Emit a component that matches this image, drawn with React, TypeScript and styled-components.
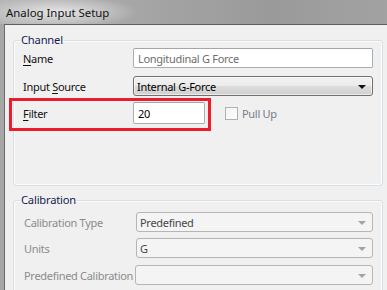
import React from "react";
import styled, { createGlobalStyle } from "styled-components";

const Global = createGlobalStyle`
  html, body { margin: 0; padding: 0; }
  body { font-family: "Segoe UI", "Noto Sans", "Open Sans", sans-serif; font-size: 11px; letter-spacing: -0.3px; }
  * { box-sizing: border-box; }
`;

const Window = styled.div`
  width: 387px;
  height: 290px;
  overflow: hidden;
  display: flex;
  flex-direction: column;
  background: #a6a6a6;
`;

const TitleBar = styled.div`
  height: 24px;
  flex: none;
  display: flex;
  align-items: center;
  padding-left: 6px;
  color: #111;
  font-size: 11.4px;
  letter-spacing: 0;
  background:
    radial-gradient(ellipse 80px 16px at 58px 12px, rgba(235,235,235,0.9), rgba(235,235,235,0) 100%),
    linear-gradient(to right, #b4b4b4 0%, #a4a4a4 40%, #9a9a9a 70%, #a2a2a2 100%);
`;

const Client = styled.div`
  flex: 1;
  margin-left: 4px;
  background: #f0f0f0;
  border-top: 1px solid #5e5e5e;
  border-left: 1px solid #6a6a6a;
  padding: 0 4px 0 8px;
  display: flex;
  flex-direction: column;
`;

const Group = styled.fieldset<{ $top: number; $height: number }>`
  margin: ${(p) => p.$top}px 0 0 0;
  height: ${(p) => p.$height}px;
  flex: none;
  border: 1px solid #d5dfe5;
  border-radius: 3px;
  box-shadow: inset 0 0 0 1px #fbfdff;
  padding: 0 9px 0 9px;
  min-width: 0;
`;

const Legend = styled.legend`
  margin-left: -3px;
  padding: 0 1px;
  line-height: 16px;
  font-size: 11.2px;
  letter-spacing: -0.2px;
  color: #141a50;
`;

const Form = styled.div<{ $pt: number }>`
  display: flex;
  flex-direction: column;
  padding-top: ${(p) => p.$pt}px;
`;

const Row = styled.div<{ $h: number; $mt: number }>`
  position: relative;
  display: flex;
  align-items: center;
  height: ${(p) => p.$h}px;
  margin-top: ${(p) => p.$mt}px;
`;

const Label = styled.div<{ $disabled?: boolean }>`
  width: 110px;
  flex: none;
  white-space: nowrap;
  padding-left: ${(p) => (p.$disabled ? 1 : 0)}px;
  color: ${(p) => (p.$disabled ? "#8b8b8b" : "#111")};
  u { text-decoration: underline; text-underline-offset: 2px; }
`;

const TextBox = styled.div<{ $w?: number; $muted?: boolean }>`
  height: 100%;
  width: ${(p) => (p.$w ? `${p.$w}px` : "auto")};
  flex: ${(p) => (p.$w ? "none" : "1")};
  background: #fff;
  border: 1px solid #abadb3;
  border-top-color: #a3a6ad;
  border-radius: 2px;
  display: flex;
  align-items: center;
  padding-left: 4px;
  white-space: nowrap;
  color: ${(p) => (p.$muted ? "#6d6d6d" : "#000")};
`;

const Select = styled.div<{ $disabled?: boolean; $ml?: number }>`
  height: 100%;
  flex: 1;
  margin-left: ${(p) => p.$ml ?? 0}px;
  border: 1px solid ${(p) => (p.$disabled ? "#b5b5b5" : "#707070")};
  border-radius: 3px;
  display: flex;
  align-items: center;
  justify-content: space-between;
  padding: 0 6px 0 3px;
  white-space: nowrap;
  color: ${(p) => (p.$disabled ? "#474747" : "#000")};
  background: ${(p) =>
    p.$disabled
      ? "#f4f4f4"
      : "linear-gradient(to bottom, #f2f2f2 0%, #ebebeb 48%, #dddddd 52%, #cfcfcf 100%)"};
  box-shadow: ${(p) => (p.$disabled ? "none" : "inset 0 0 0 1px rgba(255,255,255,0.6)")};
`;

const Arrow = styled.span<{ $disabled?: boolean }>`
  width: 0;
  height: 0;
  border-left: 4px solid transparent;
  border-right: 4px solid transparent;
  border-top: 4px solid ${(p) => (p.$disabled ? "#a3a3a3" : "#111")};
  margin-top: 1px;
`;

const CheckWrap = styled.div`
  display: flex;
  align-items: center;
  gap: 4px;
  margin-left: 20px;
  color: #7a7a8c;
`;

const CheckBox = styled.span`
  width: 13px;
  height: 13px;
  border: 1px solid #b1b1b1;
  background: linear-gradient(135deg, #f4f4f4, #fcfcfc);
`;

const Highlight = styled.div`
  position: absolute;
  left: -14px;
  top: -4px;
  width: 202px;
  height: 33px;
  border: 3px solid #ec1c2a;
  pointer-events: none;
`;

export default function App() {
  return (
    <>
      <Global />
      <Window>
        <TitleBar>Analog Input Setup</TitleBar>
        <Client>
          <Group $top={7} $height={154}>
            <Legend>Channel</Legend>
            <Form $pt={0}>
              <Row $h={20} $mt={0}>
                <Label>
                  <u>N</u>ame
                </Label>
                <TextBox $muted>Longitudinal G Force</TextBox>
              </Row>
              <Row $h={20} $mt={8}>
                <Label>
                  Input <u>S</u>ource
                </Label>
                <Select>
                  <span>Internal G-Force</span>
                  <Arrow />
                </Select>
              </Row>
              <Row $h={22} $mt={6}>
                <Highlight />
                <Label>
                  <u>F</u>ilter
                </Label>
                <TextBox $w={72}>20</TextBox>
                <CheckWrap>
                  <CheckBox />
                  <span>Pull Up</span>
                </CheckWrap>
              </Row>
            </Form>
          </Group>
          <Group $top={6} $height={110}>
            <Legend>Calibration</Legend>
            <Form $pt={4}>
              <Row $h={20} $mt={0}>
                <Label $disabled>Calibration Type</Label>
                <Select $disabled $ml={3}>
                  <span>Predefined</span>
                  <Arrow $disabled />
                </Select>
              </Row>
              <Row $h={20} $mt={6}>
                <Label $disabled>Units</Label>
                <Select $disabled $ml={3}>
                  <span>G</span>
                  <Arrow $disabled />
                </Select>
              </Row>
              <Row $h={20} $mt={7}>
                <Label $disabled>Predefined Calibration</Label>
                <Select $disabled $ml={2}>
                  <span />
                  <Arrow $disabled />
                </Select>
              </Row>
            </Form>
          </Group>
        </Client>
      </Window>
    </>
  );
}
